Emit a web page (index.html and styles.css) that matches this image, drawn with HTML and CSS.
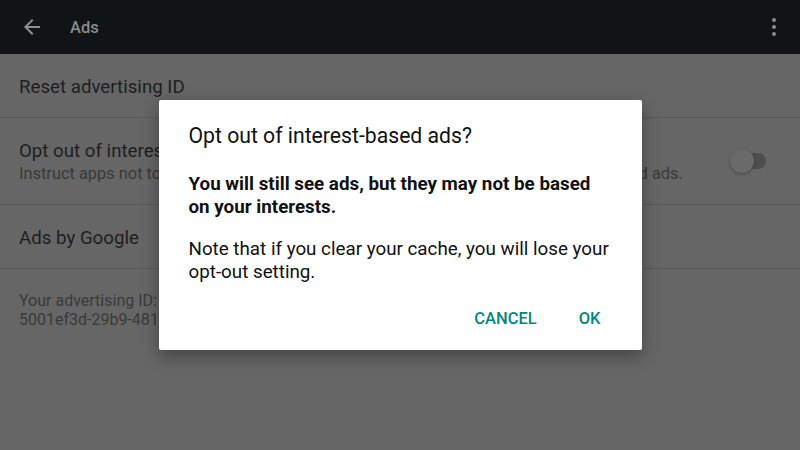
FILE: index.html
```html
<!DOCTYPE html>
<html>
<head>
<meta charset="utf-8">
<link rel="stylesheet" href="styles.css">
</head>
<body>
<div class="screen">
  <header class="appbar">
    <svg class="back" width="24" height="24" viewBox="0 0 24 24"><path d="M20 11H7.83l5.59-5.59L12 4l-8 8 8 8 1.41-1.41L7.83 13H20v-2z" fill="currentColor"/></svg>
    <span class="appbar-title">Ads</span>
    <svg class="more" width="24" height="24" viewBox="0 0 24 24"><circle cx="12" cy="5" r="2" fill="currentColor"/><circle cx="12" cy="12" r="2" fill="currentColor"/><circle cx="12" cy="19" r="2" fill="currentColor"/></svg>
  </header>
  <div class="list">
    <div class="row row-single"><span class="primary">Reset advertising ID</span></div>
    <div class="row row-double">
      <div class="texts">
        <span class="primary">Opt out of interest-based ads</span>
        <span class="secondary">Instruct apps not to use your advertising ID to build profiles or show you interest-based ads.</span>
      </div>
      <div class="switch"><span class="track"></span><span class="thumb"></span></div>
    </div>
    <div class="row row-single"><span class="primary">Ads by Google</span></div>
    <div class="info">
      <span>Your advertising ID:</span>
      <span>5001ef3d-29b9-4816-a2c1-7d3e9b0f6a21</span>
    </div>
  </div>
  <div class="scrim">
    <div class="dialog">
      <h2 class="dialog-title">Opt out of interest-based ads?</h2>
      <p class="dialog-strong">You will still see ads, but they may not be based on your interests.</p>
      <p class="dialog-text">Note that if you clear your cache, you will lose your opt&#8209;out setting.</p>
      <div class="actions">
        <button class="btn">CANCEL</button>
        <button class="btn">OK</button>
      </div>
    </div>
  </div>
</div>
</body>
</html>
```
FILE: styles.css
```css
* { box-sizing: border-box; }
html, body { margin: 0; padding: 0; }
body {
  width: 800px;
  height: 450px;
  overflow: hidden;
  font-family: Roboto, "Noto Sans", "Liberation Sans", sans-serif;
  background: #666666;
}
.screen {
  position: relative;
  width: 800px;
  height: 450px;
  display: flex;
  flex-direction: column;
}
.appbar {
  height: 54px;
  background: #111417;
  display: flex;
  align-items: center;
  padding: 0 14px 0 20px;
  color: #8d8f91;
  flex: none;
}
.back { width: 24px; height: 24px; }
.appbar-title {
  margin-left: 26px;
  font-size: 16.5px;
  font-weight: 500;
  color: #8a8c8e;
  flex: 1;
}
.more { width: 24px; height: 24px; color: #8a8c8e; }
.list {
  flex: 1;
  background: #666666;
  display: flex;
  flex-direction: column;
}
.row {
  display: flex;
  align-items: center;
  padding: 0 34px 0 19px;
  border-bottom: 1px solid #5a5a5a;
}
.row-single { height: 64px; padding-top: 2px; }
.row-double { height: 87px; }
.texts { flex: 1; display: flex; flex-direction: column; white-space: nowrap; min-width: 0; }
.primary {
  font-size: 18.7px;
  color: #1e1e1e;
  line-height: 24px;
}
.secondary {
  font-size: 16.4px;
  color: #3a3a3a;
  line-height: 21px;
}
.switch {
  position: relative;
  width: 36px;
  height: 24px;
  flex: none;
}
.track {
  position: absolute;
  left: 6px;
  top: 4px;
  width: 30px;
  height: 16px;
  border-radius: 8px;
  background: #4e4e4e;
}
.thumb {
  position: absolute;
  left: 0;
  top: 0;
  width: 24px;
  height: 24px;
  border-radius: 50%;
  background: #6a6a6a;
  box-shadow: 0 1px 3px rgba(0,0,0,0.35);
}
.info {
  padding: 22px 19px;
  display: flex;
  flex-direction: column;
  font-size: 16px;
  line-height: 19px;
  color: #3a3a3a;
  white-space: nowrap;
}
.scrim {
  position: absolute;
  inset: 0;
  display: flex;
  align-items: center;
  justify-content: center;
}
.dialog {
  width: 483px;
  height: 250px;
  margin-top: -1px;
  background: #ffffff;
  border-radius: 2px;
  box-shadow: 0 6px 18px rgba(0,0,0,0.35);
  padding: 22px 30px 0 30px;
  display: flex;
  flex-direction: column;
}
.dialog-title {
  margin: 0;
  font-size: 21.2px;
  font-weight: 400;
  line-height: 28px;
  color: #111;
}
.dialog-strong {
  margin: 23px 0 0 0;
  font-size: 18.8px;
  font-weight: 700;
  line-height: 23px;
  color: #111;
}
.dialog-text {
  margin: 19px 0 0 0;
  font-size: 18.8px;
  line-height: 23px;
  color: #111;
}
.actions {
  display: flex;
  justify-content: flex-end;
  gap: 42px;
  margin-top: 18px;
  padding-right: 11px;
}
.btn {
  background: none;
  border: none;
  font-family: inherit;
  font-size: 16.5px;
  font-weight: 500;
  color: #00897b;
  padding: 8px 0;
  line-height: 18px;
}
```
